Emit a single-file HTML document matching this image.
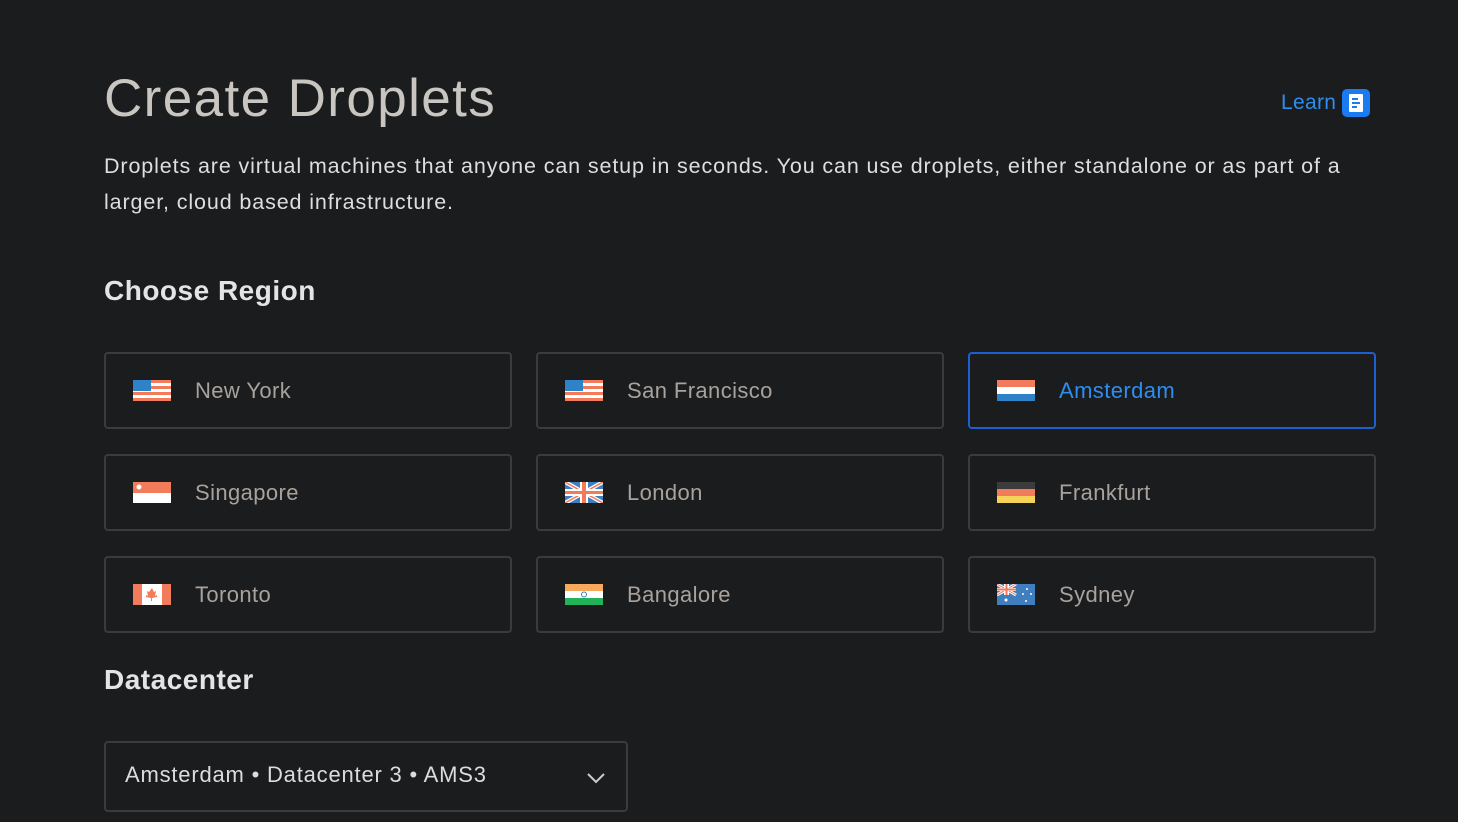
<!DOCTYPE html>
<html><head><meta charset="utf-8">
<style>
*{box-sizing:border-box;margin:0;padding:0}
body{width:1458px;height:822px;background:#1b1c1e;font-family:"Liberation Sans",sans-serif;position:relative;overflow:hidden;color:#ddd}
h1{position:absolute;left:104px;top:68px;font-size:53px;font-weight:300;color:#c9c5c0;letter-spacing:1.4px}
.desc{position:absolute;left:104px;top:148px;width:1275px;font-size:21.5px;line-height:36px;color:#dedede;letter-spacing:0.88px}
.learn{position:absolute;left:1281px;top:89px;font-size:21px;color:#2d8ef0;display:flex;align-items:center;gap:6px;letter-spacing:0.3px}
h2{position:absolute;left:104px;font-size:28px;font-weight:600;color:#e4e4e4;letter-spacing:0.5px}
.card{position:absolute;width:408px;height:77px;border:2px solid #3a3b3d;border-radius:4px;display:flex;align-items:center}
.card svg{position:absolute;left:27px;top:26px}
.card span{position:absolute;left:89px;font-size:22px;color:#a8a29c;letter-spacing:0.4px}
.card.sel{border-color:#1e5fd0}
.card.sel span{color:#2d8ef0}
.dd{position:absolute;left:104px;top:741px;width:524px;height:71px;border:2px solid #3a3b3d;border-radius:4px}
.dd span{position:absolute;left:19px;top:19px;font-size:22px;color:#dcdcdc;letter-spacing:0.8px}
.dd svg{position:absolute;right:20px;top:28px}
</style></head><body>
<h1>Create Droplets</h1>
<div class="learn">Learn <svg width="28" height="28" viewBox="0 0 28 28"><rect width="28" height="28" rx="5" fill="#1a7af0"/><rect x="7" y="5" width="14" height="18" rx="1" fill="#fff"/><rect x="10" y="9" width="6" height="2" fill="#1a7af0"/><rect x="10" y="13" width="8" height="2" fill="#1a7af0"/><rect x="10" y="17" width="5" height="2" fill="#1a7af0"/></svg></div>
<div class="desc">Droplets are virtual machines that anyone can setup in seconds. You can use droplets, either standalone or as part of a larger, cloud based infrastructure.</div>
<h2 style="top:275px">Choose Region</h2>

<div class="card" style="left:104px;top:352px"><svg width="38" height="21"><rect width="38" height="21" fill="#fff"/><g fill="#f27b5c"><rect y="0" width="38" height="3"/><rect y="6" width="38" height="3"/><rect y="12" width="38" height="3"/><rect y="18" width="38" height="3"/></g><rect width="18" height="11" fill="#2e82c8"/></svg><span>New York</span></div>
<div class="card" style="left:536px;top:352px"><svg width="38" height="21"><rect width="38" height="21" fill="#fff"/><g fill="#f27b5c"><rect y="0" width="38" height="3"/><rect y="6" width="38" height="3"/><rect y="12" width="38" height="3"/><rect y="18" width="38" height="3"/></g><rect width="18" height="11" fill="#2e82c8"/></svg><span>San Francisco</span></div>
<div class="card sel" style="left:968px;top:352px"><svg width="38" height="21"><rect width="38" height="7" fill="#f27b5c"/><rect y="7" width="38" height="7" fill="#fff"/><rect y="14" width="38" height="7" fill="#2e82c8"/></svg><span>Amsterdam</span></div>

<div class="card" style="left:104px;top:454px"><svg width="38" height="21"><rect width="38" height="11" fill="#f27b5c"/><rect y="11" width="38" height="10" fill="#fff"/><circle cx="6" cy="5" r="2.5" fill="#fff"/></svg><span>Singapore</span></div>
<div class="card" style="left:536px;top:454px"><svg width="38" height="21"><rect width="38" height="21" fill="#3f7fc0"/><path d="M0 0L38 21M38 0L0 21" stroke="#fff" stroke-width="4"/><path d="M0 0L38 21M38 0L0 21" stroke="#f27b5c" stroke-width="1.5"/><rect x="15" width="8" height="21" fill="#fff"/><rect y="7" width="38" height="7" fill="#fff"/><rect x="17" width="4" height="21" fill="#f27b5c"/><rect y="9" width="38" height="3" fill="#f27b5c"/></svg><span>London</span></div>
<div class="card" style="left:968px;top:454px"><svg width="38" height="21"><rect width="38" height="7" fill="#3c3c3c"/><rect y="7" width="38" height="7" fill="#f27b5c"/><rect y="14" width="38" height="7" fill="#f5d258"/></svg><span>Frankfurt</span></div>

<div class="card" style="left:104px;top:556px"><svg width="38" height="21"><rect width="38" height="21" fill="#fff"/><rect width="9" height="21" fill="#f27b5c"/><rect x="29" width="9" height="21" fill="#f27b5c"/><path d="M19 4l2 4 2-1-1 5 2-1 0 2-5 1v3h-1v-3l-5-1 0-2 2 1-1-5 2 1z" fill="#f27b5c"/></svg><span>Toronto</span></div>
<div class="card" style="left:536px;top:556px"><svg width="38" height="21"><rect width="38" height="7" fill="#f7a95c"/><rect y="7" width="38" height="7" fill="#fff"/><rect y="14" width="38" height="7" fill="#22b35a"/><circle cx="19" cy="10.5" r="2.5" fill="none" stroke="#3f7fc0"/></svg><span>Bangalore</span></div>
<div class="card" style="left:968px;top:556px"><svg width="38" height="21"><rect width="38" height="21" fill="#3f7fc0"/><path d="M0 0L19 11M19 0L0 11" stroke="#fff" stroke-width="3"/><path d="M0 0L19 11M19 0L0 11" stroke="#f27b5c" stroke-width="1"/><rect x="7" width="5" height="11" fill="#fff"/><rect y="4" width="19" height="3" fill="#fff"/><rect x="8.5" width="2" height="11" fill="#f27b5c"/><rect y="4.5" width="19" height="2" fill="#f27b5c"/><circle cx="9" cy="16" r="1.5" fill="#fff"/><circle cx="30" cy="5" r="1" fill="#fff"/><circle cx="34" cy="10" r="1" fill="#fff"/><circle cx="29" cy="17" r="1" fill="#fff"/><circle cx="26" cy="10" r="1" fill="#fff"/></svg><span>Sydney</span></div>

<h2 style="top:664px">Datacenter</h2>
<div class="dd"><span>Amsterdam • Datacenter 3 • AMS3</span><svg width="20" height="14" viewBox="0 0 20 14"><path d="M2 3l8 8 8-8" fill="none" stroke="#ccc" stroke-width="2"/></svg></div>
</body></html>
